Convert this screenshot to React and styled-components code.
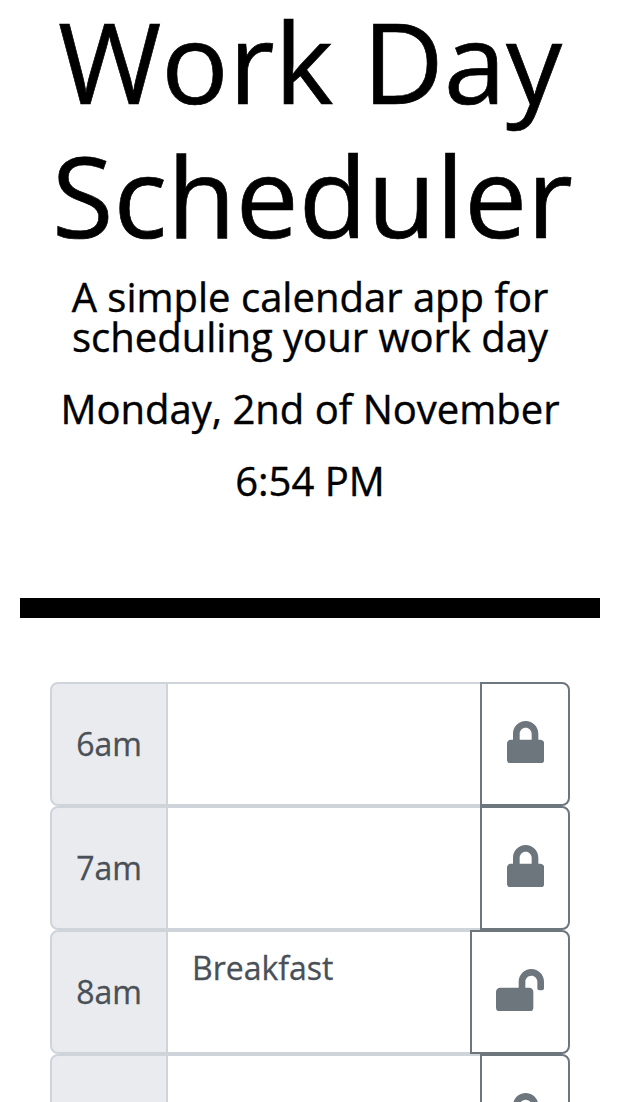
import React from "react";
import styled, { createGlobalStyle } from "styled-components";
import { FaLock, FaLockOpen } from "react-icons/fa";

const GlobalStyle = createGlobalStyle`
  *, *::before, *::after { box-sizing: border-box; }
  html, body { margin: 0; background: #fff; }
  body { font-family: "Open Sans", sans-serif; height: 1102px; overflow: hidden; }
`;

const Page = styled.div`
  width: 620px;
  height: 1102px;
  overflow: hidden;
  color: #000;
`;

const Header = styled.header`
  display: flow-root;
  margin: 0 20px;
  height: 618px;
  text-align: center;
  border-bottom: 20px solid #000;
`;

const Title = styled.h1`
  margin: -6px 0 0;
  font-size: 112px;
  font-weight: 400;
  line-height: 134.4px;
  -webkit-text-stroke: 0.7px #000;
`;

const TitleLine = styled.span`
  display: block;
  padding-left: ${(p) => p.$indent || 0}px;
`;

const Lead = styled.p`
  margin: ${(p) => p.$top || 32}px 0 0;
  font-size: 40px;
  line-height: 40px;
  -webkit-text-stroke: 0.4px #000;
`;

const Schedule = styled.main`
  padding: 64px 50px 0;
`;

const Row = styled.div`
  display: flex;
  height: 124px;
`;

const Hour = styled.div`
  flex: 0 0 118px;
  display: flex;
  align-items: center;
  justify-content: center;
  padding-bottom: 2px;
  background: #eaebef;
  border: 2px solid #ced4d9;
  border-radius: 8px 0 0 8px;
  color: #495057;
  font-size: 32px;
  -webkit-text-stroke: 0.3px #495057;
`;

const Entry = styled.div`
  flex: 1;
  margin-left: -2px;
  padding: 12px 24px;
  border: 2px solid #ced4d9;
  color: #495057;
  font-size: 32px;
  line-height: 48px;
  -webkit-text-stroke: 0.3px #495057;
`;

const LockButton = styled.button`
  flex: 0 0 ${(p) => (p.$open ? 100 : 90)}px;
  margin: 0 0 0 -2px;
  padding: 0 0 4px ${(p) => (p.$open ? 0 : 1)}px;
  display: flex;
  align-items: center;
  justify-content: center;
  background: #fff;
  border: 2px solid #6d757d;
  border-radius: 0 8px 8px 0;
  color: #6d757d;

  svg {
    width: ${(p) => (p.$open ? 48 : 37.33)}px;
    height: 42.67px;
  }
`;

const hours = [
  { time: "6am", text: "" },
  { time: "7am", text: "" },
  { time: "8am", text: "Breakfast", open: true },
  { time: "9am", text: "" },
];

export default function App() {
  return (
    <Page>
      <GlobalStyle />
      <Header>
        <Title>
          <TitleLine>Work Day</TitleLine>
          <TitleLine $indent={5}>Scheduler</TitleLine>
        </Title>
        <Lead $top={14}>A simple calendar app for<br />scheduling your work day</Lead>
        <Lead>Monday, 2nd of November</Lead>
        <Lead>6:54 PM</Lead>
      </Header>
      <Schedule>
        {hours.map((h) => (
          <Row key={h.time}>
            <Hour>{h.time}</Hour>
            <Entry>{h.text}</Entry>
            <LockButton $open={h.open}>{h.open ? <FaLockOpen /> : <FaLock />}</LockButton>
          </Row>
        ))}
      </Schedule>
    </Page>
  );
}
